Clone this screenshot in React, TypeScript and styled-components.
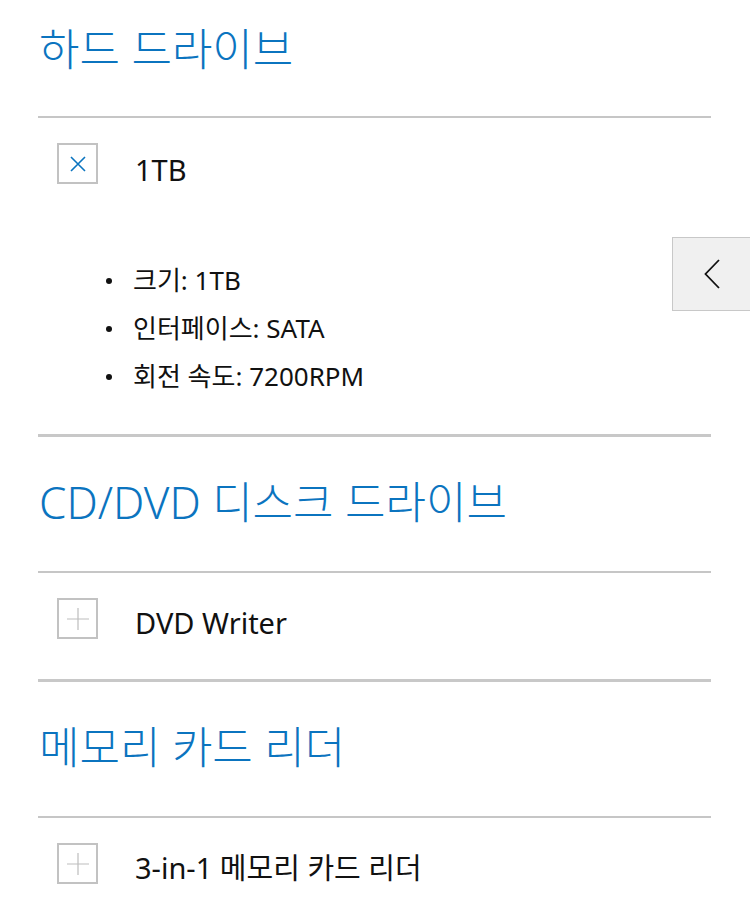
import React from 'react'
import styled, { createGlobalStyle } from 'styled-components'

const GlobalStyle = createGlobalStyle`
  html, body {
    margin: 0;
    padding: 0;
    background: #ffffff;
  }
  body {
    font-family: "Noto Sans", "Noto Sans CJK KR", sans-serif;
    color: #111111;
  }
`

interface Spec {
  label: string
  open?: boolean
  details?: string[]
}

interface Group {
  title: string
  items: Spec[]
}

const groups: Group[] = [
  {
    title: '하드 드라이브',
    items: [{ label: '1TB', open: true, details: ['크기: 1TB', '인터페이스: SATA', '회전 속도: 7200RPM'] }],
  },
  {
    title: 'CD/DVD 디스크 드라이브',
    items: [{ label: 'DVD Writer' }],
  },
  {
    title: '메모리 카드 리더',
    items: [{ label: '3-in-1 메모리 카드 리더' }],
  },
]

const App: React.FC = () => {
  return (
    <>
      <GlobalStyle />
      <Page>
        {groups.map((group, gi) => (
          <Section key={group.title}>
            <Heading $first={gi === 0}>{group.title}</Heading>
            {group.items.map((item) => (
              <Item key={item.label} $open={!!item.open}>
                <ItemHead>
                  <ToggleBox aria-label={item.open ? 'collapse' : 'expand'}>
                    {item.open ? (
                      <svg width="16" height="16" viewBox="0 0 16 16">
                        <path d="M1 1 L15 15 M15 1 L1 15" stroke="#0b74bf" strokeWidth="1.6" fill="none" />
                      </svg>
                    ) : (
                      <svg width="22" height="22" viewBox="0 0 22 22">
                        <path d="M11 0 V22 M0 11 H22" stroke="#bdbdbd" strokeWidth="1.2" fill="none" />
                      </svg>
                    )}
                  </ToggleBox>
                  <ItemLabel $open={!!item.open}>{item.label}</ItemLabel>
                </ItemHead>
                {item.details && (
                  <DetailList>
                    {item.details.map((d) => (
                      <DetailItem key={d}>{d}</DetailItem>
                    ))}
                  </DetailList>
                )}
              </Item>
            ))}
          </Section>
        ))}
      </Page>
      <SideTab aria-label="open panel">
        <svg width="16" height="30" viewBox="0 0 16 30">
          <path d="M15 1 L1.5 15 L15 29" stroke="#111111" strokeWidth="1.8" fill="none" />
        </svg>
      </SideTab>
    </>
  )
}

const Page = styled.div`
  width: 673px;
  margin-left: 38px;
`

const Section = styled.section``

const Heading = styled.h2<{ $first: boolean }>`
  margin: 0;
  padding: ${(p) => (p.$first ? '25px 0 42px 1px' : '41px 0 44px 1px')};
  font-size: 44px;
  line-height: 49px;
  font-weight: 300;
  color: #0b74bf;
  border-bottom: 2px solid #c6c6c6;
`

const Item = styled.div<{ $open: boolean }>`
  padding: 25px 0 ${(p) => (p.$open ? '34px' : '40px')} 19px;
  border-bottom: 3px solid #c8c8c8;
`

const ItemHead = styled.div`
  display: flex;
  align-items: flex-start;
  height: 41px;
`

const ToggleBox = styled.button`
  box-sizing: border-box;
  width: 41px;
  height: 41px;
  padding: 0;
  border: 2px solid #c2c2c2;
  background: #ffffff;
  display: flex;
  align-items: center;
  justify-content: center;
  flex-shrink: 0;
`

const ItemLabel = styled.span<{ $open: boolean }>`
  margin-left: 37px;
  margin-top: ${(p) => (p.$open ? '7px' : '5px')};
  font-size: 29px;
  line-height: 40px;
  font-weight: 400;
  color: #111111;
  white-space: nowrap;
`

const DetailList = styled.ul`
  list-style: none;
  margin: 72px 0 0;
  padding: 0 0 0 76px;
`

const DetailItem = styled.li`
  position: relative;
  font-size: 26px;
  line-height: 48px;
  color: #111111;

  &::before {
    content: '';
    position: absolute;
    left: -27px;
    top: 22px;
    width: 6px;
    height: 6px;
    border-radius: 50%;
    background: #111111;
  }
`

const SideTab = styled.button`
  position: fixed;
  top: 237px;
  right: 0;
  box-sizing: border-box;
  width: 78px;
  height: 74px;
  padding: 0;
  border: 1px solid #c8c8c8;
  border-right: none;
  background: #f0f0f0;
  display: flex;
  align-items: center;
  justify-content: center;
`

export default App
